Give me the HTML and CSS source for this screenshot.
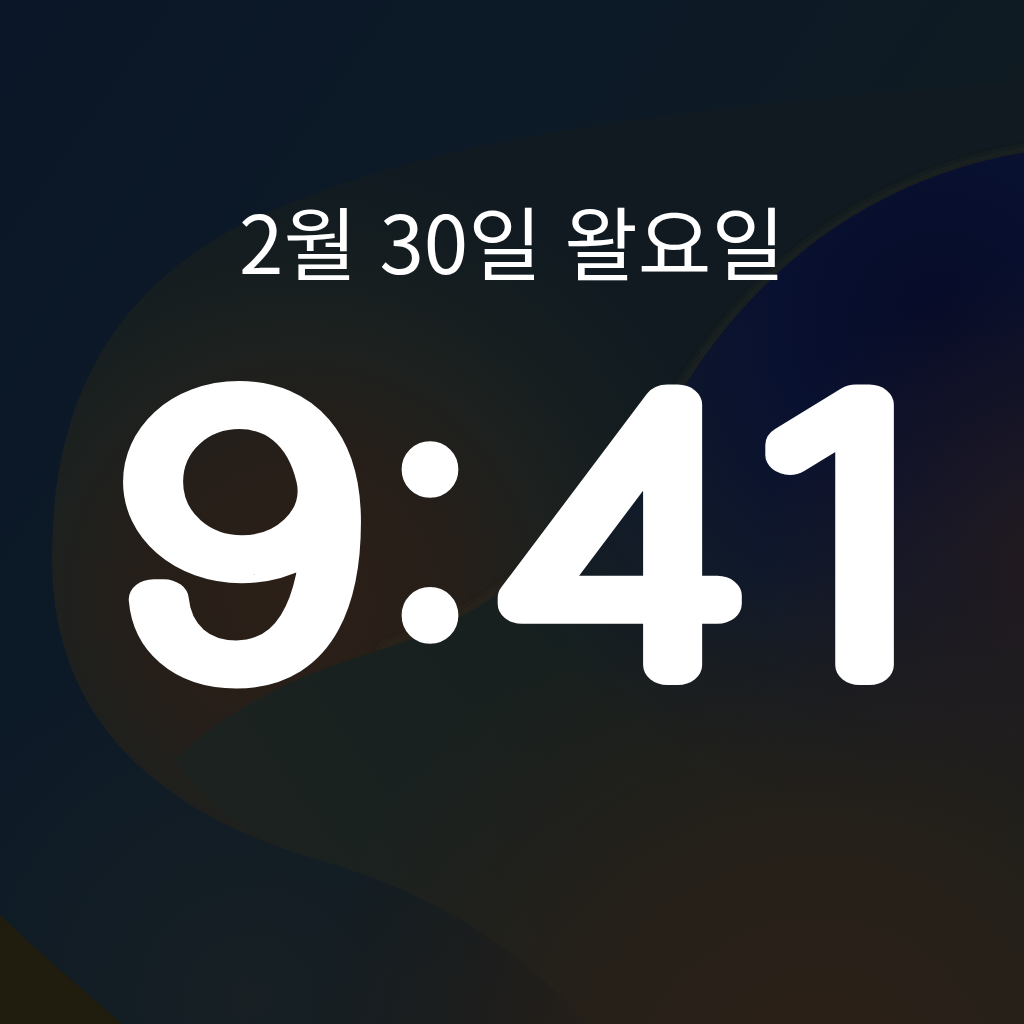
FILE: index.html
```html
<!DOCTYPE html>
<html lang="ko">
<head>
<meta charset="utf-8">
<title>잠금 화면</title>
<link rel="stylesheet" href="styles.css">
</head>
<body>
<main class="lock">
  <div class="date">2월 30일 왈요일</div>
  <svg class="clock" width="1024" height="420" viewBox="0 0 1024 420" role="img" aria-label="9:41">
    <text class="time digits" x="0" y="365" transform="translate(242 0) scale(1.25 1)">9</text>
    <text class="time colon" x="430" y="340">:</text>
    <text class="time digits pair" x="0" y="365" transform="translate(711 0) scale(1.22 1)">41</text>
  </svg>
</main>
</body>
</html>
```
FILE: styles.css
```css
html, body {
  margin: 0;
  padding: 0;
  width: 1024px;
  height: 1024px;
  overflow: hidden;
}
body {
  background-color: #0c1727;
  background-image: url("data:image/svg+xml;utf8,<svg xmlns='http://www.w3.org/2000/svg' width='1024' height='1024' viewBox='0 0 1024 1024'><defs><linearGradient id='b' x1='0' y1='0' x2='1' y2='0.7'><stop offset='0' stop-color='%230b1728'/><stop offset='0.5' stop-color='%230d1a26'/><stop offset='0.8' stop-color='%23101b1f'/><stop offset='1' stop-color='%23121b1d'/></linearGradient><radialGradient id='a' gradientUnits='userSpaceOnUse' cx='300' cy='600' r='440'><stop offset='0' stop-color='%232c2017'/><stop offset='0.35' stop-color='%23261e19'/><stop offset='0.6' stop-color='%231c211f'/><stop offset='0.8' stop-color='%23151d20'/><stop offset='1' stop-color='%23101a20'/></radialGradient><radialGradient id='r' gradientUnits='userSpaceOnUse' cx='940' cy='320' r='860'><stop offset='0' stop-color='%23060b29'/><stop offset='0.2' stop-color='%23091130'/><stop offset='0.4' stop-color='%23111a29'/><stop offset='0.6' stop-color='%2317201f'/><stop offset='1' stop-color='%231b2220'/></radialGradient><radialGradient id='br' gradientUnits='userSpaceOnUse' cx='820' cy='1090' r='520'><stop offset='0' stop-color='%232c2017' stop-opacity='1'/><stop offset='0.5' stop-color='%23291f17' stop-opacity='0.75'/><stop offset='1' stop-color='%23291f17' stop-opacity='0'/></radialGradient><radialGradient id='br2' gradientUnits='userSpaceOnUse' cx='1060' cy='560' r='300'><stop offset='0' stop-color='%23291c1a' stop-opacity='0.8'/><stop offset='1' stop-color='%23291c1a' stop-opacity='0'/></radialGradient><radialGradient id='low' gradientUnits='userSpaceOnUse' cx='250' cy='1000' r='380'><stop offset='0' stop-color='%23182024'/><stop offset='1' stop-color='%23131e25' stop-opacity='0'/></radialGradient><filter id='g'><feGaussianBlur stdDeviation='5'/></filter></defs><rect width='1024' height='1024' fill='url(%23b)'/><rect width='1024' height='1024' fill='url(%23low)'/><path d='M52,560 C52,390 120,290 240,225 C420,140 640,110 1040,80 L1040,1040 L600,1040 C520,930 420,885 320,860 C160,815 52,720 52,560 Z' fill='url(%23a)'/><path filter='url(%23g)' d='M1040,150 C880,172 770,262 700,362 C620,482 540,602 380,650' fill='none' stroke='%232e2c1c' stroke-opacity='0.6' stroke-width='8'/><path d='M1040,150 C880,172 770,262 700,362 C620,482 540,602 380,650 C300,674 230,705 175,760 C200,800 250,840 320,860 C420,890 520,940 600,1040 L1040,1040 Z' fill='url(%23r)'/><rect width='1024' height='1024' fill='url(%23br2)'/><rect width='1024' height='1024' fill='url(%23br)'/><path d='M-10,905 C40,955 90,995 140,1040 L-10,1040 Z' fill='%23201d0e'/></svg>");
  background-repeat: no-repeat;
  background-size: 1024px 1024px;
  color: #ffffff;
}
.lock {
  display: flex;
  flex-direction: column;
  align-items: center;
  padding-top: 199px;
}
.date {
  font-family: "Noto Sans CJK KR", "Noto Sans", sans-serif;
  font-weight: 400;
  font-size: 80px;
  line-height: 1;
}
.clock {
  display: block;
  margin-top: 21px;
  overflow: visible;
}
.time {
  font-family: "Inter", "Noto Sans", sans-serif;
  fill: #ffffff;
  stroke: #ffffff;
  stroke-linejoin: round;
  stroke-linecap: round;
  text-anchor: middle;
}
.digits {
  font-weight: 100;
  font-size: 358px;
  stroke-width: 40px;
}
.pair {
  letter-spacing: 11px;
}
.colon {
  font-weight: 500;
  font-size: 380px;
  stroke-width: 2px;
}
```
